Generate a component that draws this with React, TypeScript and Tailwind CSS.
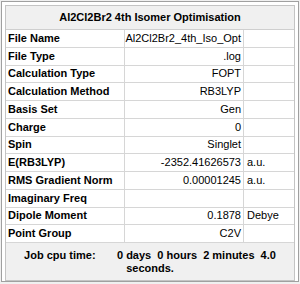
const rows: [string, string, string][] = [
  ["File Name", "Al2Cl2Br2_4th_Iso_Opt", ""],
  ["File Type", ".log", ""],
  ["Calculation Type", "FOPT", ""],
  ["Calculation Method", "RB3LYP", ""],
  ["Basis Set", "Gen", ""],
  ["Charge", "0", ""],
  ["Spin", "Singlet", ""],
  ["E(RB3LYP)", "-2352.41626573", "a.u."],
  ["RMS Gradient Norm", "0.00001245", "a.u."],
  ["Imaginary Freq", "", ""],
  ["Dipole Moment", "0.1878", "Debye"],
  ["Point Group", "C2V", ""],
];

export default function App() {
  return (
    <div
      className="w-[300px] h-[284px] bg-[#f0f0f0] p-[1px] text-[#000]"
      style={{ fontFamily: "Tahoma, 'Liberation Sans', Arial, sans-serif" }}
    >
      <div className="h-[281px] border border-[#a0a0a0] bg-white p-[3px] pr-[3px]">
        <div className="border border-[#c4c4c4] bg-[#f0f0f0] h-[276px] flex flex-col">
          <div className="h-[24px] flex items-center justify-center font-bold text-[11px] border-b border-[#cfcfcf]">
            Al2Cl2Br2 4th Isomer Optimisation
          </div>
          <div className="flex flex-col bg-white">
            {rows.map(([label, value, unit]) => (
              <div key={label} className="h-[17.75px] flex border-b border-[#d6d6d6] text-[11px] leading-none">
                <div className="w-[119px] shrink-0 border-r border-[#d6d6d6] flex items-center pl-[2px] font-bold">
                  {label}
                </div>
                <div className="w-[119px] shrink-0 border-r border-[#d6d6d6] flex items-center justify-end pr-[2px]">
                  {value}
                </div>
                <div className="flex-1 flex items-center pl-[3px]">{unit}</div>
              </div>
            ))}
          </div>
          <div className="flex-1 flex flex-col items-center justify-center font-bold text-[11px] leading-[13px] pt-[1px]">
            <div className="whitespace-pre">Job cpu time:       0 days  0 hours  2 minutes  4.0</div>
            <div className="whitespace-pre">seconds.</div>
          </div>
        </div>
      </div>
    </div>
  );
}
